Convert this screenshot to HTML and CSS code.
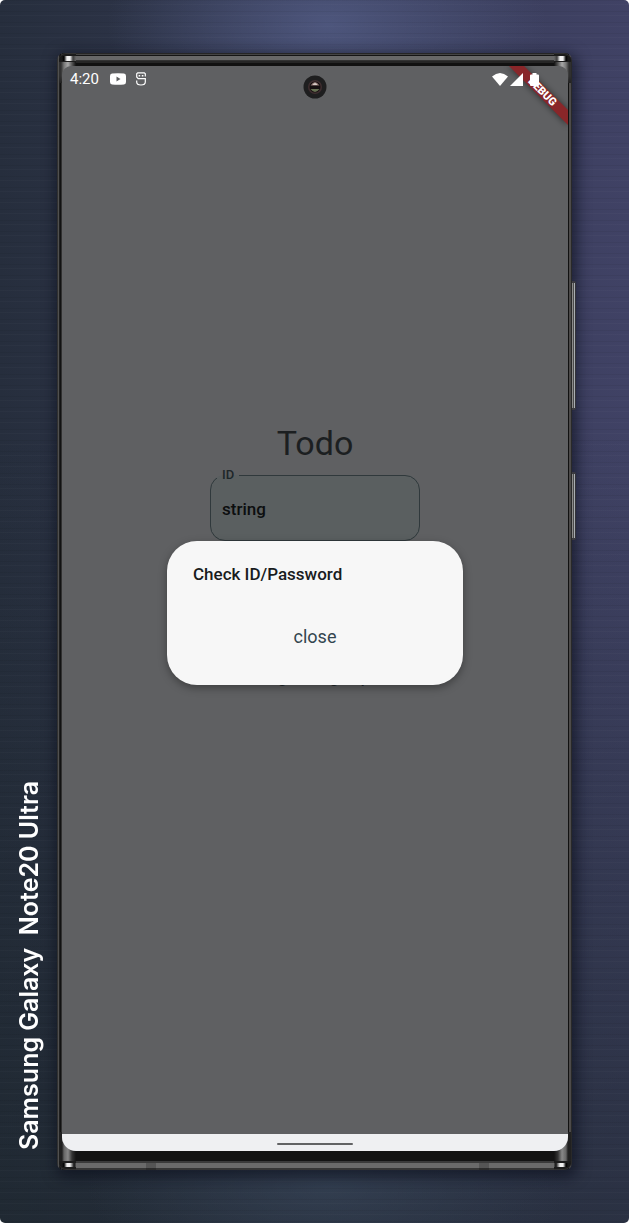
FILE: index.html
```html
<!DOCTYPE html>
<html lang="en">
<head>
<meta charset="utf-8">
<meta name="viewport" content="width=device-width, initial-scale=1">
<title>Todo</title>
<link rel="stylesheet" href="styles.css">
</head>
<body>
<div class="stage">
  <aside class="device-label"><span class="device-name">Samsung Galaxy&nbsp; Note20 Ultra</span></aside>
  <div class="phone">
    <div class="rail rail-top"></div>
    <span class="corner top-left"></span>
    <span class="corner top-right"></span>
    <span class="corner bottom-left"></span>
    <span class="corner bottom-right"></span>
    <span class="side-key volume"></span>
    <span class="side-key power"></span>
    <div class="screen">
      <main class="app">
        <h1 class="app-title">Todo</h1>
        <form class="login">
          <fieldset class="field">
            <legend class="field-label"><label for="user-id">ID</label></legend>
            <input class="field-input" id="user-id" type="text" value="string">
          </fieldset>
          <fieldset class="field">
            <input class="field-input" type="password" aria-label="Password">
          </fieldset>
          <div class="actions">
            <button class="text-button" type="button">Login</button>
            <button class="text-button" type="button">Sign up</button>
          </div>
        </form>
      </main>
      <svg class="debug-banner" viewBox="0 0 64 64" aria-hidden="true">
        <path class="banner-shade" d="M4 0H20L64 44V60Z"/>
        <path class="banner-band" d="M5 0H20L64 44V59Z"/>
        <text class="banner-text" transform="translate(38 26) rotate(45)" y="3" text-anchor="middle">DEBUG</text>
      </svg>
      <header class="status-bar">
        <span class="clock">4:20</span>
        <svg class="icon-video" viewBox="0 0 16 12"><path fill="#fff" fill-rule="evenodd" d="M2 .5Q8-.2 14 .5Q16 .7 16 3V9Q16 11.3 14 11.5Q8 12.2 2 11.5Q0 11.3 0 9V3Q0 .7 2 .5ZM6.500 3.500V8.500L10.500 6Z"/></svg>
        <svg class="icon-app" viewBox="0 0 10 14"><g fill="none" stroke="#fff" stroke-width="1.200"><path d="M9.300 4.500V1.700L8.300.8H1.700L.7 1.700V5L2.200 6.600H9.300V10Q9.300 13 5 13Q.7 13 .7 10V8.600"/></g><path fill="#fff" d="M2.600 3H4.200V4.400H2.600ZM5.800 3H7.400V4.400H5.800Z"/></svg>
        <span class="spacer"></span>
        <svg class="icon-wifi" viewBox="0 0 16 13"><path fill="#fff" d="M0 3.500Q8-3.500 16 3.500L8 13Z"/></svg>
        <svg class="icon-signal" viewBox="0 0 13 13"><path fill="#fff" d="M13 0V13H0Z"/></svg>
        <svg class="icon-battery" viewBox="0 0 9 13"><path fill="#fff" d="M2.500 0H6.500V1.500H8Q9 1.500 9 2.500V12Q9 13 8 13H1Q0 13 0 12V2.500Q0 1.500 1 1.500H2.500Z"/></svg>
      </header>
      <svg class="camera" viewBox="0 0 24 24" aria-hidden="true">
        <circle cx="12" cy="12" r="11.500" fill="#1e1e1f"/>
        <circle cx="12" cy="12" r="7" fill="#3f2e30"/>
        <circle cx="12" cy="12" r="5.500" fill="#160f10"/>
        <path d="M7.500 10.500Q12 3.500 16.500 10.500Z" fill="#8f7571"/>
        <path d="M9.500 10Q12 6 14.500 10Z" fill="#d8ccc6"/>
        <path d="M7.500 14Q12 20 16.500 14Z" fill="#667052"/>
      </svg>
      <div class="scrim">
        <section class="dialog" role="dialog" aria-labelledby="dialog-title">
          <h2 class="dialog-title" id="dialog-title">Check ID/Password</h2>
          <button class="dialog-close" type="button">close</button>
        </section>
      </div>
      <nav class="gesture-bar"><span class="gesture-handle"></span></nav>
    </div>
    <div class="rail rail-bottom"></div>
  </div>
</div>
</body>
</html>
```
FILE: styles.css
```css
* { box-sizing: border-box; }

body {
  margin: 0;
  background: #ffffff;
  font-family: Roboto, "Liberation Sans", sans-serif;
}

.stage {
  display: grid;
  grid-template-columns: 57px 1fr 57px;
  min-height: 100vh;
  padding: 53px 0;
  border-radius: 5px;
  background:
    repeating-linear-gradient(180deg, rgba(0, 0, 0, 0.05) 0 1px, transparent 1px 4px, rgba(255, 255, 255, 0.02) 4px 5px, transparent 5px 11px),
    radial-gradient(ellipse 220px 120px at 52% 2%, rgba(88, 98, 142, 0.7), transparent),
    radial-gradient(ellipse 240px 100px at 52% 97%, rgba(58, 72, 92, 0.6), transparent),
    linear-gradient(180deg, transparent 35%, rgba(28, 38, 44, 0.6)),
    linear-gradient(90deg, #262e3d, #30364c 35%, #404265);
}

.device-label {
  display: flex;
  flex-direction: column;
  justify-content: flex-end;
  align-items: center;
  padding-bottom: 20px;
}

.device-name {
  writing-mode: vertical-rl;
  transform: rotate(180deg);
  color: #ffffff;
  font: 600 25px/34px Inter, sans-serif;
  white-space: nowrap;
}

.phone {
  position: relative;
  display: flex;
  flex-direction: column;
  padding: 0 4px 0 5px;
  border-radius: 7px;
  background: linear-gradient(90deg, #303030 0 1px, #505050 1px 2px, #202020 2px 3px, #111111 3px 4px, #303030 4px 5px, #151515 5px calc(100% - 4px), #111111 calc(100% - 4px) calc(100% - 3px), #4c4a49 calc(100% - 3px) calc(100% - 1px), #292929 calc(100% - 1px));
  box-shadow: 2px 4px 14px 3px rgba(8, 12, 25, 0.6);
}

.rail { margin: 0 5px; }

.rail-top {
  height: 13px;
  background: linear-gradient(180deg, #262626 0 1px, #444444 1px 2px, #151515 2px 3px, #686868 3px 7px, #333333 7px 8px, #262626 8px 10px, #111111 10px);
}

.rail-bottom {
  height: 19px;
  background:
    linear-gradient(90deg, transparent 16%, rgba(0, 0, 0, 0.2) 16% 18%, transparent 18% 83%, rgba(0, 0, 0, 0.2) 83% 85%, transparent 85%) 0 12px no-repeat,
    linear-gradient(180deg, #131313 0 10px, #3a3a3a 10px 12px, #6a6a6a 12px 17px, #363636 17px);
}

.corner {
  position: absolute;
  width: 17px;
}

.top-left,
.top-right {
  top: 0;
  height: 30px;
  border-top: 1px solid #303030;
  border-top-left-radius: 7px;
  background:
    linear-gradient(90deg, #1a1a1a 0 3px, #000000 5px, #f0f0f0 8px 11px, #3c3c3c 14px, #686868) 0 2px / 100% 5px no-repeat,
    linear-gradient(180deg, #1c1c1c 0 8px, transparent 8px 22px, #222222),
    linear-gradient(90deg, #303030 0 2px, #777777 5px, #a8a8a8 9px, #555555 13px, #111111);
}

.bottom-left,
.bottom-right {
  bottom: 0;
  height: 38px;
  border-bottom: 1px solid #303030;
  border-bottom-left-radius: 7px;
  background:
    linear-gradient(90deg, #1a1a1a 0 3px, #000000 5px, #f0f0f0 8px 11px, #111111 15px, #505050) 0 31px / 100% 4px no-repeat,
    linear-gradient(0deg, #1c1c1c 0 8px, transparent 8px 28px, #222222),
    linear-gradient(90deg, #202020 0 3px, #666666 5px, #888888 9px, #333333 13px, #131313);
}

.top-left, .bottom-left { left: 2px; }
.top-right, .bottom-right { right: 1px; transform: scaleX(-1); }

.side-key {
  position: absolute;
  left: 100%;
  width: 4px;
  border-block: 2px solid #3a3a40;
  border-radius: 0 2px 2px 0;
  background: linear-gradient(90deg, #8a8a8a 0 1px, #4c4c4c 1px 2px, #a9adb2 2px 3px, #333338 3px);
}
.volume { top: 228px; height: 129px; }
.power { top: 419px; height: 68px; }

.screen {
  position: relative;
  flex: 1;
  display: flex;
  flex-direction: column;
  overflow: hidden;
  border-radius: 9px 9px 14px 14px;
  background: #5f6062;
}

.app {
  flex: 1;
  display: flex;
  flex-direction: column;
  align-items: center;
  justify-content: center;
  padding-bottom: 79px;
}

.app-title {
  margin: 0 0 5px;
  color: #1c1f21;
  font-size: 34px;
  font-weight: 400;
  line-height: 40px;
}

.login {
  display: flex;
  flex-direction: column;
  gap: 23px;
  width: 210px;
}

.field {
  height: 73px;
  min-width: 0;
  margin: 0;
  padding: 0 10px 0 6px;
  border: 1px solid #30393c;
  border-radius: 15px;
  background: #5a5f60;
}

.field-label {
  padding: 0 5px;
  color: #1d2629;
  font-size: 13px;
  font-weight: 500;
  line-height: 14px;
}

.field-input {
  width: 100%;
  height: 54px;
  padding: 0 5px;
  border: 0;
  outline: 0;
  background: transparent;
  color: #0c0e0f;
  font: 500 17px/20px Roboto, sans-serif;
}

.actions {
  display: flex;
  justify-content: center;
  gap: 16px;
}

.text-button {
  padding: 8px 0 10px;
  border: 0;
  background: none;
  color: #1c2629;
  font: 500 16px/20px Roboto, sans-serif;
}

.status-bar {
  position: absolute;
  inset: 0 0 auto;
  display: flex;
  align-items: center;
  height: 26px;
  padding: 0 29px 0 8px;
  color: #ffffff;
}

.clock { margin-right: 11px; font-size: 15px; line-height: 26px; }
.spacer { flex: 1; }
.icon-video { width: 16px; height: 12px; margin-right: 10px; }
.icon-app { width: 10px; height: 14px; }
.icon-wifi { width: 16px; height: 13px; margin-right: 2px; }
.icon-signal { width: 13px; height: 13px; margin-right: 7px; }
.icon-battery { width: 9px; height: 13px; }

.camera {
  position: absolute;
  top: 9px;
  left: 50%;
  width: 24px;
  height: 24px;
  margin-left: -12px;
}

.debug-banner {
  position: absolute;
  top: 0;
  right: 0;
  width: 64px;
  height: 64px;
  overflow: visible;
}
.banner-shade { fill: #000000; opacity: 0.5; filter: blur(3px); }
.banner-band { fill: #892629; }
.banner-text { fill: #ffffff; font: 900 11px Roboto, sans-serif; }

.scrim {
  position: absolute;
  inset: 0;
  display: grid;
  place-items: center;
  padding: 26px 0 17px;
}

.dialog {
  display: flex;
  flex-direction: column;
  gap: 30px;
  width: 296px;
  padding: 21px 26px 27px;
  border-radius: 30px;
  background: #f7f7f7;
  box-shadow: 0 3px 8px rgba(0, 0, 0, 0.35);
}

.dialog-title {
  margin: 0;
  color: #191c1e;
  font-size: 17px;
  font-weight: 500;
  line-height: 24px;
}

.dialog-close {
  align-self: center;
  padding: 9px 12px;
  border: 0;
  background: none;
  color: #33454f;
  font: 400 18px/24px Roboto, sans-serif;
}

.gesture-bar {
  display: flex;
  align-items: center;
  justify-content: center;
  height: 17px;
  padding-top: 2px;
  background: #eff0f2;
}

.gesture-handle {
  width: 76px;
  height: 2px;
  border-radius: 1px;
  background: #626364;
}
```
